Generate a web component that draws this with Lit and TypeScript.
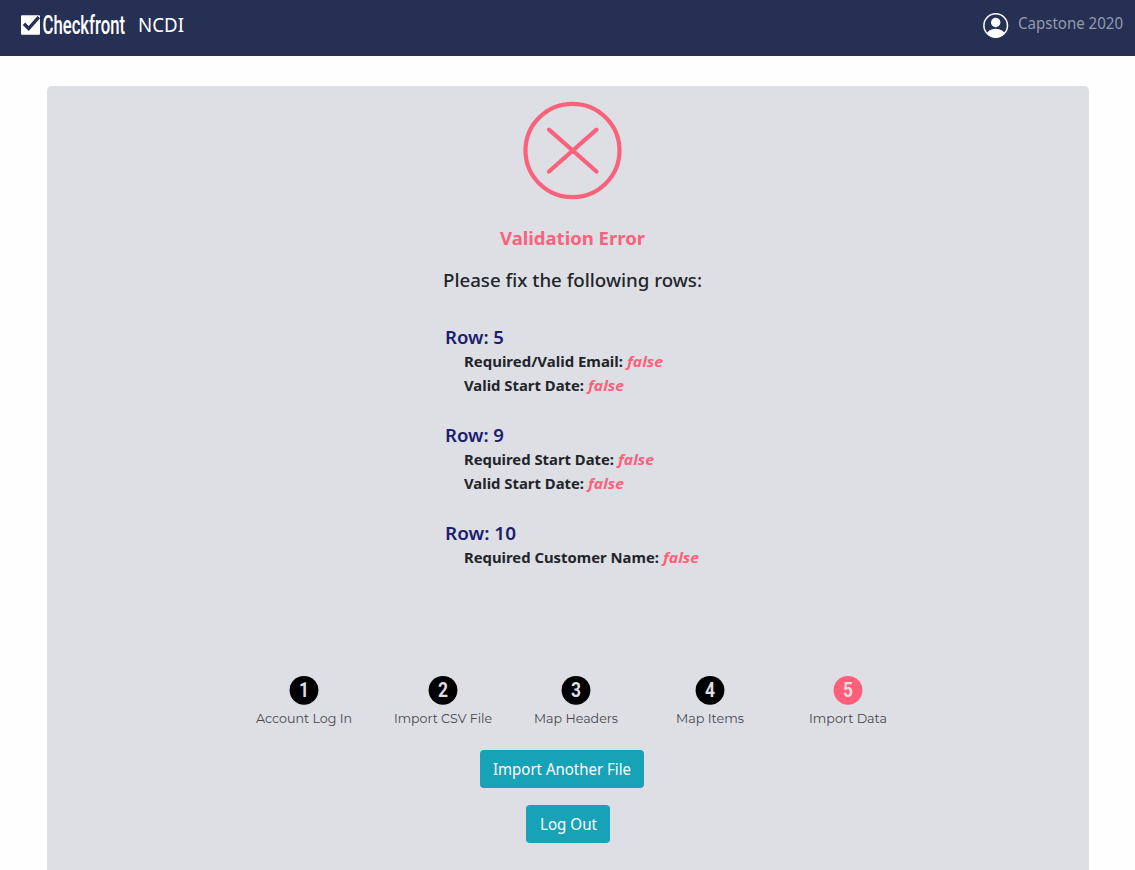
import { LitElement, html, css } from "lit";
import { customElement } from "lit/decorators.js";

interface Check { label: string; width: number; }
interface RowError { row: number; width: number; checks: Check[]; }

const ERRORS: RowError[] = [
  { row: 5, width: 59, checks: [{ label: "Required/Valid Email:", width: 159 }, { label: "Valid Start Date:", width: 120 }] },
  { row: 9, width: 59, checks: [{ label: "Required Start Date:", width: 150 }, { label: "Valid Start Date:", width: 120 }] },
  { row: 10, width: 71, checks: [{ label: "Required Customer Name:", width: 195 }] },
];

const STEPS = [
  { name: "Account Log In", width: 96 },
  { name: "Import CSV File", width: 98 },
  { name: "Map Headers", width: 84 },
  { name: "Map Items", width: 68 },
  { name: "Import Data", width: 78 },
];

@customElement("app-root")
export class AppRoot extends LitElement {
  static styles = css`
    :host { display: block; height: 870px; overflow: hidden; background: #fefefe; color: #212529;
      font-family: "Noto Sans", "Open Sans", sans-serif; }
    * { box-sizing: border-box; }
    svg { display: block; }
    .nav { height: 56px; background: #263054; display: flex; justify-content: space-between; padding: 0 12px 0 20px; }
    .brand, .user { display: flex; align-items: flex-start; }
    .logo { font-family: "Roboto", sans-serif; font-weight: 500; }
    .panel { margin: 30px 46px 0 47px; height: 800px; border-radius: 5px; background: #dedfe5;
      padding-top: 15px; display: flex; flex-direction: column; }
    .result { align-self: center; margin-left: 8px; width: 260px; display: flex; flex-direction: column; align-items: center; }
    .title { margin-top: 24px; }
    .lead { margin-top: 12px; }
    .rows { width: 255px; margin-top: 29px; height: 349px; }
    .group { height: 98px; }
    .indent { margin-left: 19px; }
    .check { display: flex; height: 23.5px; gap: 4px; }
    .steps { display: flex; margin-left: 209px; height: 75px; }
    .step { display: flex; flex-direction: column; align-items: center; margin-right: 42px; }
    .step:nth-child(3) { margin-right: 58px; }
    .step:nth-child(4) { margin-right: 65px; }
    .name { font-family: Montserrat, Inter, sans-serif; }
    .digit { font-family: Roboto, sans-serif; font-weight: 700; font-size: 19px; }
    .btn { border: 0; border-radius: 4px; background: #17a2b8; height: 38px; padding: 0; display: flex;
      align-items: center; justify-content: center; font-family: inherit; }
    .import { width: 164px; margin-left: 433px; }
    .logout { width: 84px; margin: 17px 0 0 479px; }
  `;

  /* One line of text set to an exact advance width. */
  line(text: string, width: number, height: number, base: number, size: number, weight: number, fill: string, cls = "") {
    return html`<svg class=${cls} width=${width} height=${height} overflow="visible">
      <text x="0" y=${base} font-size=${size} font-weight=${weight} fill=${fill}
        font-style=${cls === "false" ? "italic" : "normal"}
        textLength=${width} lengthAdjust="spacingAndGlyphs">${text}</text></svg>`;
  }

  digit(n: number) {
    return html`<svg width="30" height="30" viewBox="0 0 30 30">
      <circle cx="15" cy="15.3" r="14.4" fill=${n === 5 ? "#ff5f78" : "#000"} />
      <text class="digit" transform="translate(15 22) scale(.92 1.06)" text-anchor="middle" fill="#dedfe5">${n}</text></svg>`;
  }

  render() {
    return html`
      <header class="nav">
        <div class="brand">
          <svg width="118" height="56" viewBox="0 0 118 56">
            <rect x="1" y="15.3" width="19" height="19.4" rx="1" fill="#fff" />
            <path d="M4 23.8l4.7 4.8L18.8 17.2" fill="none" stroke="#263054" stroke-width="3.4" />
            <text class="logo" transform="translate(22.5 34.4) scale(.65 1)" font-size="25" textLength="127" lengthAdjust="spacingAndGlyphs" fill="#fff">Checkfront</text>
          </svg>
          ${this.line("NCDI", 46, 56, 32, 19.6, 400, "#fff")}
        </div>
        <div class="user">
          <svg width="35" height="56" viewBox="0 0 35 56">
            <defs><clipPath id="face"><circle cx="12.7" cy="25.5" r="12" /></clipPath></defs>
            <circle cx="12.7" cy="25.5" r="11.8" fill="none" stroke="#fff" stroke-width="1.5" />
            <circle cx="12.7" cy="22.5" r="4.7" fill="#fff" />
            <ellipse cx="12.7" cy="34.5" rx="9" ry="5.8" fill="#fff" clip-path="url(#face)" />
          </svg>
          ${this.line("Capstone 2020", 105, 56, 29, 15.4, 400, "#939bae")}
        </div>
      </header>
      <main class="panel">
        <section class="result">
          <svg width="100" height="100" viewBox="0 0 100 100" fill="none" stroke="#fa627c" stroke-width="4.2" stroke-linecap="round">
            <ellipse cx="50.5" cy="49.5" rx="47" ry="46.7" />
            <path d="M27 28.7L74.5 70.5M74.5 28.7L27 70.5" />
          </svg>
          ${this.line("Validation Error", 145, 30, 20, 18.6, 700, "#fa627c", "title")}
          ${this.line("Please fix the following rows:", 259, 30, 20, 18.8, 500, "#212529", "lead")}
          <div class="rows">
            ${ERRORS.map((e) => html`<div class="group">
              ${this.line(`Row: ${e.row}`, e.width, 26, 18, 18, 600, "#1d1d70")}
              <div class="indent">${e.checks.map((c) => html`<div class="check">
                ${this.line(c.label, c.width, 23, 15, 15, 700, "#212529")}
                ${this.line("false", 36, 23, 15, 15, 700, "#fa627c", "false")}
              </div>`)}</div></div>`)}
          </div>
        </section>
        <nav class="steps">
          ${STEPS.map((s, i) => html`<div class="step">
            ${this.digit(i + 1)}
            ${this.line(s.name, s.width, 20, 17.5, 12.5, 400, "#45474d", "name")}
          </div>`)}
        </nav>
        <button class="btn import">${this.line("Import Another File", 138, 38, 25, 15.4, 400, "#fff")}</button>
        <button class="btn logout">${this.line("Log Out", 57, 38, 25, 15.4, 400, "#fff")}</button>
      </main>`;
  }
}
